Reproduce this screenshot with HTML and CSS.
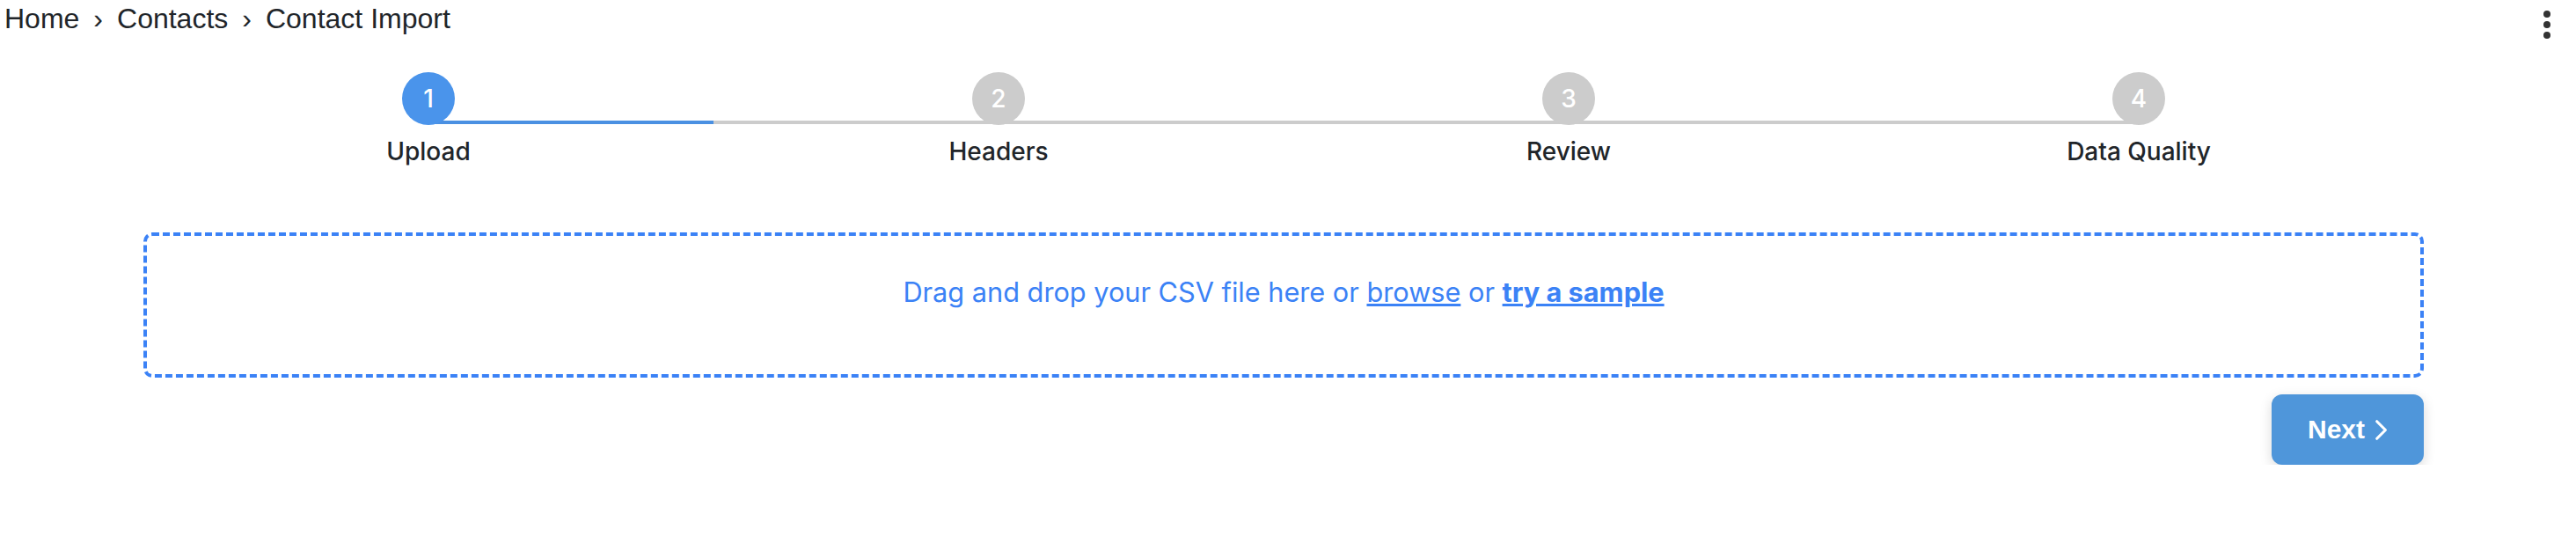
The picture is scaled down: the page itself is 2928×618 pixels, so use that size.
FILE: index.html
```html
<!DOCTYPE html>
<html lang="en">
<head>
  <meta charset="UTF-8" />
  <title>Contact Import</title>
  <link rel="stylesheet" href="styles.css">
</head>
<body>
  <div class="topbar">
    <ol class="breadcrumb">
      <li class="breadcrumb-item"><a href="#">Home</a></li>
      <li class="breadcrumb-item"><a href="#">Contacts</a></li>
      <li class="breadcrumb-item active">Contact Import</li>
    </ol>
    <button class="kebab" aria-label="More">
      <span class="kebab-dot"></span>
      <span class="kebab-dot"></span>
      <span class="kebab-dot"></span>
    </button>
  </div>

  <main class="import">
    <div class="steps">
      <div class="steps-track"><div class="steps-progress"></div></div>
      <div class="step active">
        <div class="step-circle">1</div>
        <div class="step-label">Upload</div>
      </div>
      <div class="step">
        <div class="step-circle">2</div>
        <div class="step-label">Headers</div>
      </div>
      <div class="step">
        <div class="step-circle">3</div>
        <div class="step-label">Review</div>
      </div>
      <div class="step">
        <div class="step-circle">4</div>
        <div class="step-label">Data Quality</div>
      </div>
    </div>

    <div class="dropzone">
      <p>Drag and drop your CSV file here or <a href="#">browse</a> or <a href="#" class="sample">try a sample</a></p>
    </div>

    <div class="actions">
      <button class="btn-next">Next
        <svg class="btn-next__icon" viewBox="0 0 18 28"><path d="M3 3 L14 14 L3 25" /></svg>
      </button>
    </div>
  </main>
</body>
</html>
```

FILE: styles.css
```css
* { margin: 0; padding: 0; box-sizing: border-box; }
body {
  font-family: Inter, Roboto, "Liberation Sans", sans-serif;
  color: #212529;
  background: #fff;
}

.topbar {
  display: flex;
  justify-content: space-between;
  align-items: flex-start;
  height: 40px;
  padding: 0 29px 0 5px;
}

.breadcrumb {
  display: flex;
  list-style: none;
  font-family: "Liberation Sans", Arial, sans-serif;
  font-size: 32px;
  line-height: 38px;
  padding-top: 2px;
}

.breadcrumb a {
  color: #212529;
  text-decoration: none;
}

.breadcrumb-item + .breadcrumb-item::before {
  content: "›";
  padding: 0 16px;
  color: #212529;
}

.kebab {
  display: flex;
  flex-direction: column;
  gap: 4px;
  padding-top: 12px;
  border: none;
  background: transparent;
  cursor: pointer;
}

.kebab-dot {
  width: 8px;
  height: 8px;
  border-radius: 50%;
  background: #333;
}

.import {
  width: 2592px;
  margin-left: 163px;
}

.steps {
  position: relative;
  display: grid;
  grid-template-columns: repeat(4, 1fr);
  margin-top: 42px;
}

.steps-track {
  position: absolute;
  top: 55px;
  left: 324px;
  right: 324px;
  height: 4px;
  background: #cccccc;
}

.steps-progress {
  width: 324px;
  height: 100%;
  background: #4a90e2;
}

.step {
  position: relative;
  display: flex;
  flex-direction: column;
  align-items: center;
}

.step-circle {
  width: 60px;
  height: 60px;
  border-radius: 50%;
  background: #cccccc;
  color: #fff;
  font-size: 28px;
  font-weight: 500;
  display: flex;
  align-items: center;
  justify-content: center;
}

.step.active .step-circle {
  background: #4a94eb;
}

.step-label {
  margin-top: 13px;
  font-size: 28px;
  font-weight: 500;
  line-height: 34px;
  color: #212529;
}

.dropzone {
  margin-top: 75px;
  height: 165px;
  padding-bottom: 30px;
  border: 4px dashed #3b82f6;
  border-radius: 10px;
  display: flex;
  align-items: center;
  justify-content: center;
  color: #3b82f6;
  font-size: 30.7px;
}

.dropzone a {
  color: #3b82f6;
  text-decoration: underline;
}

.dropzone .sample {
  font-weight: 700;
}

.actions {
  display: flex;
  justify-content: flex-end;
  margin-top: 19px;
}

.btn-next {
  display: flex;
  align-items: center;
  gap: 11px;
  width: 173px;
  height: 80px;
  padding: 0 40px 0 41px;
  border: none;
  border-radius: 12px;
  background: #4f96da;
  color: #fff;
  font-family: "Liberation Sans", Arial, sans-serif;
  font-size: 30px;
  font-weight: 700;
  box-shadow: 0 4px 14px rgba(0, 0, 0, 0.15);
  cursor: pointer;
}

.btn-next__icon {
  width: 17px;
  height: 27px;
  fill: none;
  stroke: #fff;
  stroke-width: 3.5;
  stroke-linecap: round;
  stroke-linejoin: round;
}
```
